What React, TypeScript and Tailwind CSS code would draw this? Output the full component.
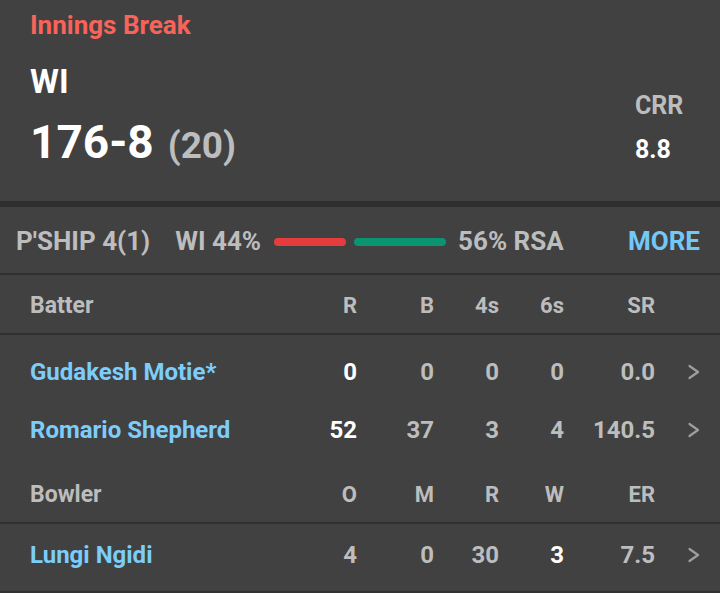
import React from "react";

const batters = [
  { name: "Gudakesh Motie*", r: "0", b: "0", fours: "0", sixes: "0", sr: "0.0" },
  { name: "Romario Shepherd", r: "52", b: "37", fours: "3", sixes: "4", sr: "140.5" },
];

function Chevron() {
  return (
    <svg width="14" height="16" viewBox="0 0 14 16" fill="none">
      <path d="M2.5 2l8.5 6-8.5 6" stroke="#9e9e9e" strokeWidth="2.2" strokeLinecap="round" strokeLinejoin="round" />
    </svg>
  );
}

function Row({
  cells,
  name,
  header,
  boldIdx,
  chevron,
  className,
}: {
  cells: string[];
  name: string;
  header?: boolean;
  boldIdx?: number;
  chevron?: boolean;
  className?: string;
}) {
  const widths = ["w-[60px]", "w-[77px]", "w-[65px]", "w-[65px]", "w-[91px]"];
  return (
    <div className={`flex items-center pl-[30px] ${className ?? ""}`}>
      <div
        className={`flex-1 ${header ? "text-[23px] text-[#bdbdbd] pt-[2px]" : "text-[24px] text-[#7dcdfb]"}`}
      >
        {name}
      </div>
      {cells.map((c, i) => (
        <div
          key={i}
          className={`${widths[i]} text-right ${
            header ? "text-[22px] text-[#bdbdbd]" : "text-[24px]"
          } ${!header && i === boldIdx ? "text-white" : !header ? "text-[#bdbdbd]" : ""}`}
        >
          {c}
        </div>
      ))}
      <div className="w-[65px] pl-[32px] flex items-center">{chevron && <Chevron />}</div>
    </div>
  );
}

export default function App() {
  return (
    <div
      className="w-[720px] h-[593px] bg-[#414141] font-bold overflow-hidden"
      style={{ fontFamily: "Roboto, 'Noto Sans', sans-serif" }}
    >
      {/* SCORE HEADER */}
      <div className="h-[201px] pl-[30px] pr-[35px] flex">
        <div className="flex-1">
          <div className="pt-[8px] text-[26px] text-[#f8635a] leading-[34px]">Innings Break</div>
          <div className="mt-[22px] text-[33px] text-white leading-[36px]">WI</div>
          <div className="mt-[16px] flex items-baseline gap-[14px] leading-[52px]">
            <span className="text-[46px] text-white">176-8</span>
            <span className="text-[37px] text-[#bdbdbd]">(20)</span>
          </div>
        </div>
        <div className="pt-[90px] w-[50px]">
          <div className="text-[25px] text-[#bdbdbd] leading-[32px]">CRR</div>
          <div className="mt-[12px] text-[25px] text-white leading-[32px]">8.8</div>
        </div>
      </div>
      <div className="h-[6px] bg-[#2e2e2e]" />

      {/* PARTNERSHIP */}
      <div className="h-[66px] pt-[3px] flex items-center pl-[16px] pr-[20px] text-[26px] text-[#bdbdbd]">
        <span>P'SHIP 4(1)</span>
        <span className="ml-[25px]">WI 44%</span>
        <div className="ml-[13px] h-[8px] w-[72px] rounded-full bg-[#e53d3d]" />
        <div className="ml-[8px] h-[8px] w-[92px] rounded-full bg-[#0a9470]" />
        <span className="ml-[12px]">56% RSA</span>
        <span className="ml-auto text-[#74c8f7]">MORE</span>
      </div>
      <div className="h-[2px] bg-[#303030]" />

      {/* BATTERS */}
      <Row className="h-[58px] pt-[3px]" header name="Batter" cells={["R", "B", "4s", "6s", "SR"]} />
      <div className="h-[2px] bg-[#303030]" />
      <div className="pt-[8px]">
        {batters.map((b) => (
          <Row
            key={b.name}
            className="h-[58px]"
            name={b.name}
            cells={[b.r, b.b, b.fours, b.sixes, b.sr]}
            boldIdx={0}
            chevron
          />
        ))}
      </div>

      {/* BOWLER */}
      <Row className="h-[63px] pt-[8px]" header name="Bowler" cells={["O", "M", "R", "W", "ER"]} />
      <div className="h-[2px] bg-[#303030]" />
      <Row className="h-[67px] pb-[6px]" name="Lungi Ngidi" cells={["4", "0", "30", "3", "7.5"]} boldIdx={3} chevron />
      <div className="h-[3px] bg-[#303030]" />
    </div>
  );
}
